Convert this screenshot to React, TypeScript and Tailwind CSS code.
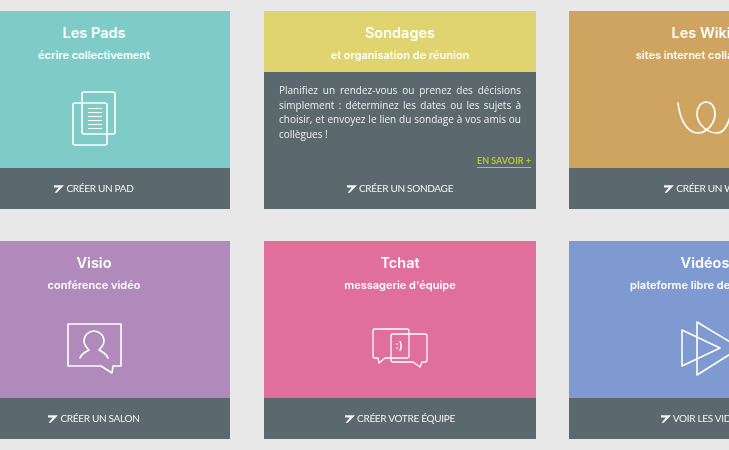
import React from "react";

const sans = "font-['Inter',sans-serif]";

function PadIcon() {
  return (
    <svg width="80" height="60" viewBox="0 0 80 60" fill="none" stroke="currentColor" strokeWidth="1.6" strokeLinejoin="round">
      <rect x="28" y="4" width="33" height="42" rx="2" />
      <rect x="19" y="15" width="34" height="42" rx="2" />
      <path d="M34 20.5H48M34 24.5H48M34 28.5H48M34 32.5H48M34 36.5H48M34 40.5H48" strokeWidth="1.1" />
    </svg>
  );
}

function WikiIcon() {
  return (
    <svg width="80" height="60" viewBox="0 0 80 60" fill="none" stroke="currentColor" strokeWidth="1.7" strokeLinecap="round">
      <path d="M13 15C15 33 23 45 33 45C42 45 50 35 50 26C50 18 46 14 41 14C36 14 32 19 32 26C32 36 42 45 52 45C60 45 66 33 67 15" />
    </svg>
  );
}

function VisioIcon() {
  return (
    <svg width="80" height="60" viewBox="0 0 80 60" fill="none" stroke="currentColor" strokeWidth="1.6" strokeLinejoin="round" strokeLinecap="round">
      <path d="M14 6H67V48H59L58 55L47 48H14Z" />
      <path d="M26 40C28 35 32 34 35 32C32 29 30 26 30 23C30 17 35 13 40 13C45 13 50 17 50 23C50 26 48 29 45 32C48 34 52 35 54 40" />
    </svg>
  );
}

function ChatIcon() {
  return (
    <svg width="80" height="60" viewBox="0 0 80 60" fill="none" stroke="currentColor" strokeWidth="1.3" strokeLinejoin="round">
      <path d="M15 11H47Q49 11 49 13V38Q49 40 47 40H25L19 45L18 40H15Q13 40 13 38V13Q13 11 15 11Z" />
      <path d="M33 16H65Q67 16 67 18V42Q67 44 65 44H62L60 49L53 44H33Q31 44 31 42V18Q31 16 33 16Z" />
      <text x="39" y="31" textAnchor="middle" fontSize="11" fontFamily="Inter, sans-serif" fill="currentColor" stroke="none" fontWeight="600">
        :)
      </text>
    </svg>
  );
}

function VideoIcon() {
  return (
    <svg width="80" height="60" viewBox="0 0 80 60" fill="none" stroke="currentColor" strokeWidth="1.6" strokeLinejoin="round" className="overflow-visible">
      <path d="M17 12V48L55 30Z" />
      <path d="M32 4V57L75 30Z" />
    </svg>
  );
}

function Pencil() {
  return (
    <svg width="10" height="8" viewBox="0 0 10 8" fill="currentColor" className="shrink-0">
      <path d="M0 0.3H10L2.8 7.8H0.6L4.8 2.6H0Z" />
    </svg>
  );
}

function Footer({ label }: { label: string }) {
  return (
    <div className="h-[41px] flex items-center justify-center gap-[2px] text-[#f2f4f4] text-[10px] tracking-[-0.3px] uppercase font-['Lato',sans-serif]">
      <Pencil />
      <span>{label}</span>
    </div>
  );
}

function Heading({ title, subtitle }: { title: string; subtitle: string }) {
  return (
    <>
      <h2 className={`mt-3 text-[14.5px] leading-5 font-semibold text-white ${sans}`}>{title}</h2>
      <p className={`mt-1 text-[11px] leading-4 font-semibold text-white whitespace-nowrap ${sans}`}>{subtitle}</p>
    </>
  );
}

function Card({
  bg,
  title,
  subtitle,
  cta,
  icon,
}: {
  bg: string;
  title: string;
  subtitle: string;
  cta: string;
  icon: React.ReactNode;
}) {
  return (
    <div className="w-[272px] h-[198px] flex flex-col bg-[#5b686d]">
      <div className={`flex-1 flex flex-col items-center text-white ${bg}`}>
        <Heading title={title} subtitle={subtitle} />
        <div className="mt-[25px]">{icon}</div>
      </div>
      <Footer label={cta} />
    </div>
  );
}

function PollCard() {
  return (
    <div className="w-[272px] h-[198px] flex flex-col bg-[#5b686d]">
      <div className="h-[61px] flex flex-col items-center bg-[#dfd46f]">
        <Heading title="Sondages" subtitle="et organisation de réunion" />
      </div>
      <div className="flex-1 px-[15px] pt-[11px] font-['Open_Sans',sans-serif]">
        <p className="text-[10px] leading-[14.5px] text-[#eef0f0] text-justify">
          Planifiez un rendez-vous ou prenez des décisions simplement : déterminez les dates ou les sujets à choisir, et
          envoyez le lien du sondage à vos amis ou collègues !
        </p>
        <div className="mt-[14px] -mr-[10px] flex justify-end">
          <span className="text-[9px] leading-[12px] font-bold text-[#b4c92c] border-b border-[#b4c92c] font-['Lato',sans-serif]">
            EN SAVOIR +
          </span>
        </div>
      </div>
      <Footer label="Créer un sondage" />
    </div>
  );
}

export default function App() {
  return (
    <div className="w-[729px] h-[450px] overflow-hidden bg-[#e8e8e8]">
      <div className="w-[883px] -ml-[42px] pt-[11px] grid grid-cols-[306px_305px_272px] gap-y-[32px] blur-[0.4px]">
        <Card bg="bg-[#7ecbc7]" title="Les Pads" subtitle="écrire collectivement" cta="Créer un pad" icon={<PadIcon />} />
        <PollCard />
        <Card bg="bg-[#cfa461]" title="Les Wikis" subtitle="sites internet collaboratifs" cta="Créer un wiki" icon={<WikiIcon />} />
        <Card bg="bg-[#b08abb]" title="Visio" subtitle="conférence vidéo" cta="Créer un salon" icon={<VisioIcon />} />
        <Card bg="bg-[#e0709b]" title="Tchat" subtitle="messagerie d'équipe" cta="Créer votre équipe" icon={<ChatIcon />} />
        <Card bg="bg-[#7f9ad1]" title="Vidéos" subtitle="plateforme libre de diffusion" cta="Voir les vidéos" icon={<VideoIcon />} />
      </div>
    </div>
  );
}
